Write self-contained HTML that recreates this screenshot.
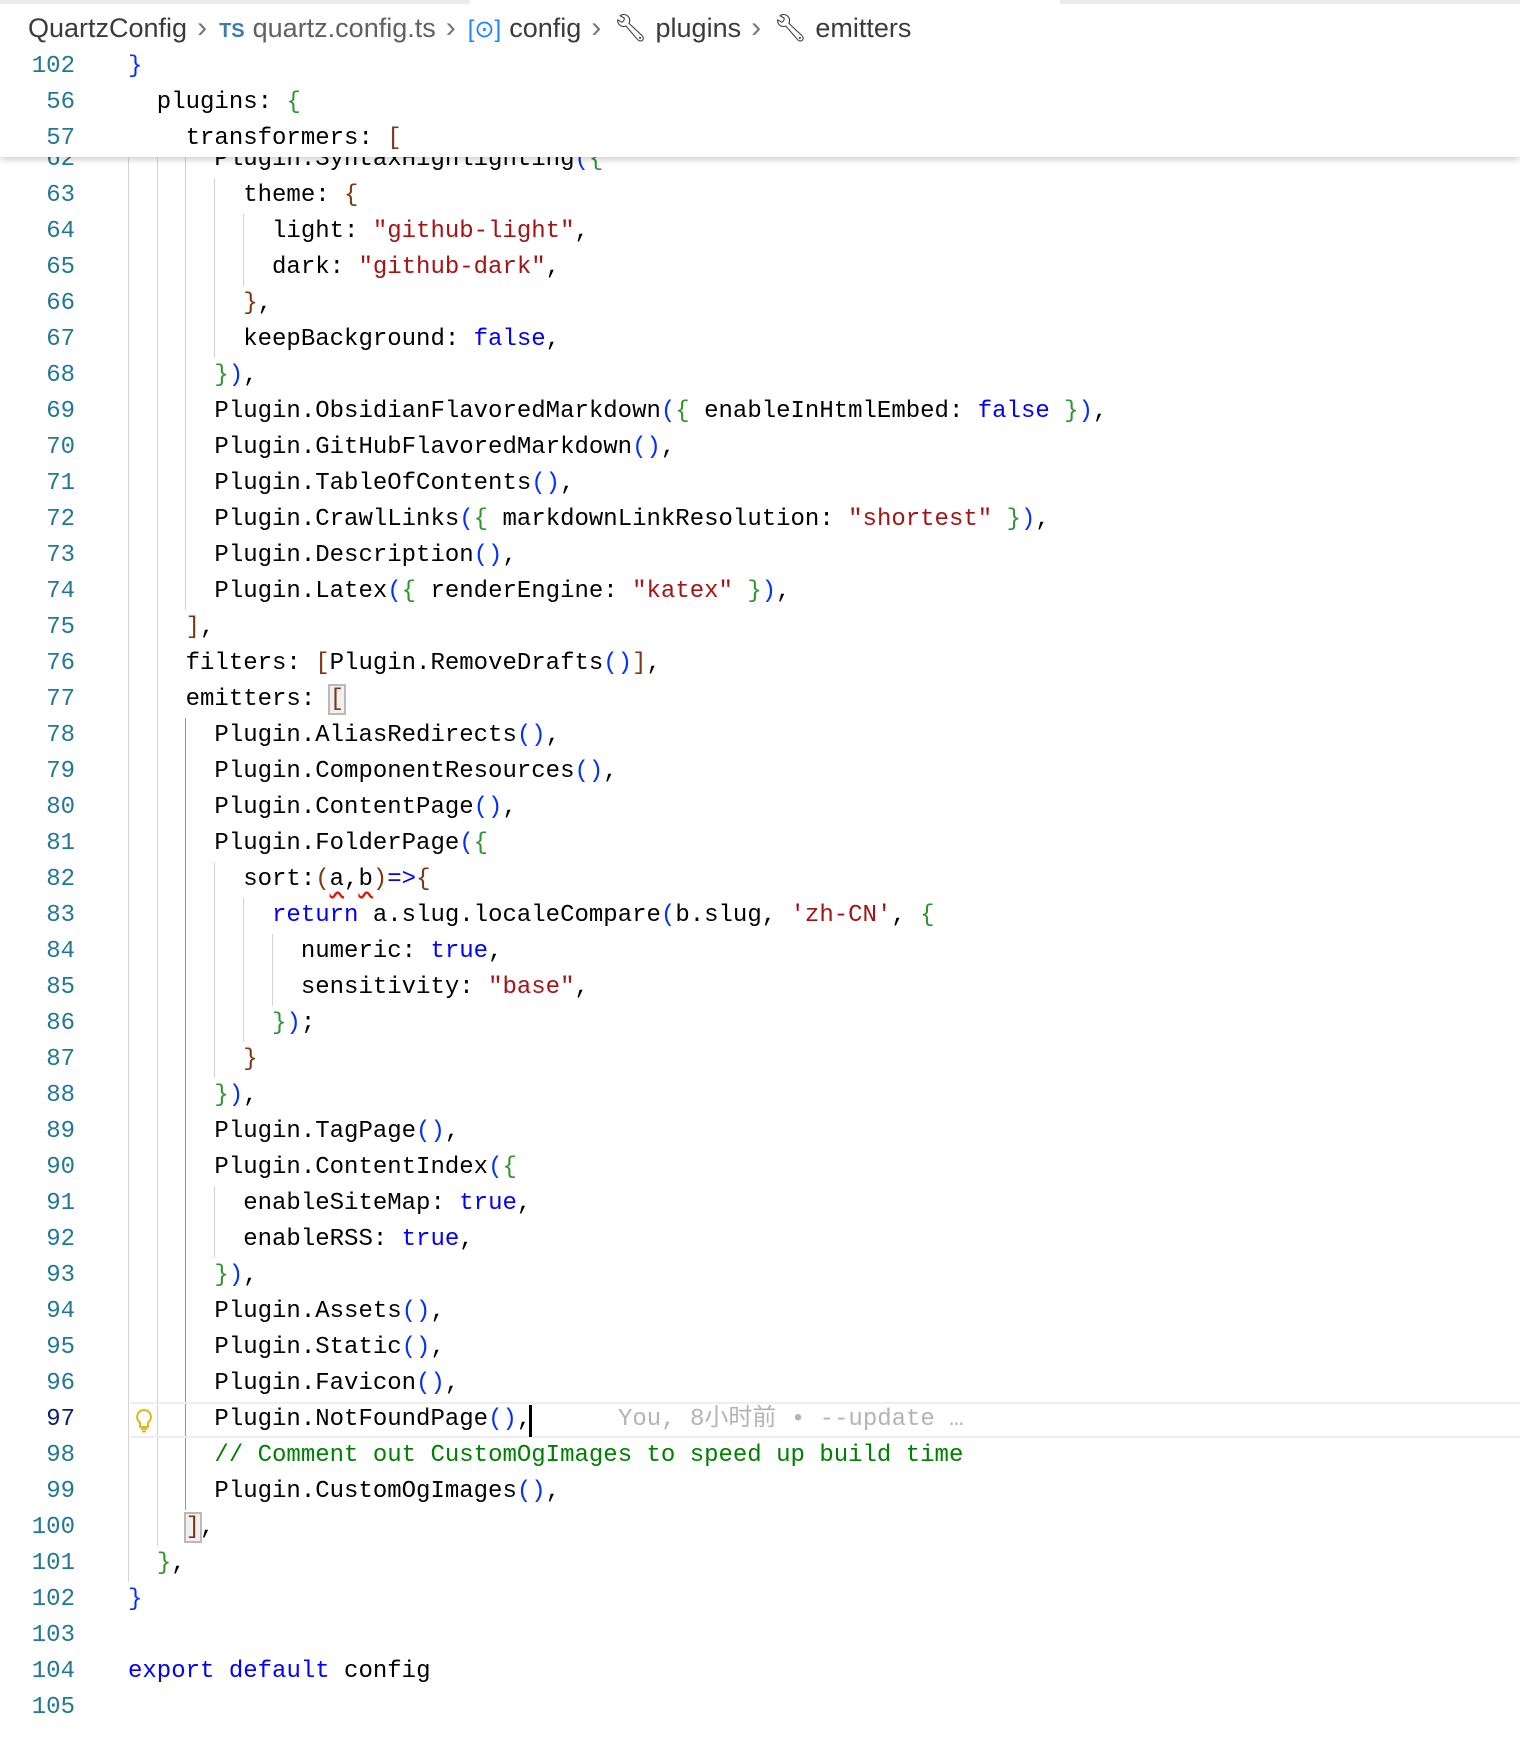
<!DOCTYPE html>
<html><head><meta charset="utf-8"><style>
html,body{margin:0;padding:0;background:#fff;width:1520px;height:1752px;overflow:hidden;position:relative}
.ln{position:absolute;left:0;width:75px;text-align:right;font:24px/36px "Liberation Mono",monospace;color:#237893;height:36px}
.cd{position:absolute;left:128px;font:24px/36px "Liberation Mono",monospace;color:#000;white-space:pre;height:36px}
.k{color:#0000ff}.s{color:#a31515}.b1{color:#0431fa}.b2{color:#319331}.b3{color:#7b3814}.c{color:#008000}
.g{position:absolute;width:1px;background:#d3d3d3}
.sq{text-decoration:underline wavy #e51400;text-underline-offset:6px}
.box{outline:2px solid #b9b9b9;background:#f0f0f0}
#sticky{position:absolute;left:0;top:0;width:1520px;height:157px;background:#fff;box-shadow:0 3px 6px rgba(0,0,0,.18);z-index:5}
.bc{position:absolute;top:9px;font:27px/38px "Liberation Sans",sans-serif;color:#616161;white-space:nowrap}
.ch{color:#777;font-size:30px;padding:0 12px 0 10px}
.ic{margin-right:8px}
</style></head><body>
<div style="position:absolute;left:0;top:0;width:1520px;height:4px;background:#ececec;z-index:6"></div>
<div style="position:absolute;left:470px;top:0;width:590px;height:4px;background:#fff;z-index:7"></div>

<div id="sticky">
 <div class="bc" style="left:28px;color:#3b3b3b">QuartzConfig<span class="ch">&#x203A;</span><span class="ic" style="color:#3d7ea6;font-weight:bold;font-size:20px">TS</span><span style="color:#616161">quartz.config.ts</span><span class="ch">&#x203A;</span><span class="ic" style="color:#1a85ff;font-size:24px">[&#x2299;]</span><span>config</span><span class="ch">&#x203A;</span><span class="ic">&#x1F527;&#xFE0E;</span>plugins<span class="ch">&#x203A;</span><span class="ic">&#x1F527;&#xFE0E;</span>emitters</div>
 <div class="ln" style="top:49px">102</div><div class="cd" style="top:49px"><span class="b1">}</span></div>
 <div class="ln" style="top:85px">56</div><div class="cd" style="top:85px">  plugins: <span class="b2">{</span></div>
 <div class="ln" style="top:121px">57</div><div class="cd" style="top:121px">    transformers: <span class="b3">[</span></div>
</div>

<div id="code"></div>
<script>
const L=[
[62,'      Plugin.SyntaxHighlighting<span class="b1">(</span><span class="b2">{</span>'],
[63,'        theme: <span class="b3">{</span>'],
[64,'          light: <span class="s">"github-light"</span>,'],
[65,'          dark: <span class="s">"github-dark"</span>,'],
[66,'        <span class="b3">}</span>,'],
[67,'        keepBackground: <span class="k">false</span>,'],
[68,'      <span class="b2">}</span><span class="b1">)</span>,'],
[69,'      Plugin.ObsidianFlavoredMarkdown<span class="b1">(</span><span class="b2">{</span> enableInHtmlEmbed: <span class="k">false</span> <span class="b2">}</span><span class="b1">)</span>,'],
[70,'      Plugin.GitHubFlavoredMarkdown<span class="b1">()</span>,'],
[71,'      Plugin.TableOfContents<span class="b1">()</span>,'],
[72,'      Plugin.CrawlLinks<span class="b1">(</span><span class="b2">{</span> markdownLinkResolution: <span class="s">"shortest"</span> <span class="b2">}</span><span class="b1">)</span>,'],
[73,'      Plugin.Description<span class="b1">()</span>,'],
[74,'      Plugin.Latex<span class="b1">(</span><span class="b2">{</span> renderEngine: <span class="s">"katex"</span> <span class="b2">}</span><span class="b1">)</span>,'],
[75,'    <span class="b3">]</span>,'],
[76,'    filters: <span class="b3">[</span>Plugin.RemoveDrafts<span class="b1">()</span><span class="b3">]</span>,'],
[77,'    emitters: <span class="b3 box">[</span>'],
[78,'      Plugin.AliasRedirects<span class="b1">()</span>,'],
[79,'      Plugin.ComponentResources<span class="b1">()</span>,'],
[80,'      Plugin.ContentPage<span class="b1">()</span>,'],
[81,'      Plugin.FolderPage<span class="b1">(</span><span class="b2">{</span>'],
[82,'        sort:<span class="b3">(</span><span class="sq">a</span>,<span class="sq">b</span><span class="b3">)</span><span class="k">=&gt;</span><span class="b3">{</span>'],
[83,'          <span class="k">return</span> a.slug.localeCompare<span class="b1">(</span>b.slug, <span class="s">\'zh-CN\'</span>, <span class="b2">{</span>'],
[84,'            numeric: <span class="k">true</span>,'],
[85,'            sensitivity: <span class="s">"base"</span>,'],
[86,'          <span class="b2">}</span><span class="b1">)</span>;'],
[87,'        <span class="b3">}</span>'],
[88,'      <span class="b2">}</span><span class="b1">)</span>,'],
[89,'      Plugin.TagPage<span class="b1">()</span>,'],
[90,'      Plugin.ContentIndex<span class="b1">(</span><span class="b2">{</span>'],
[91,'        enableSiteMap: <span class="k">true</span>,'],
[92,'        enableRSS: <span class="k">true</span>,'],
[93,'      <span class="b2">}</span><span class="b1">)</span>,'],
[94,'      Plugin.Assets<span class="b1">()</span>,'],
[95,'      Plugin.Static<span class="b1">()</span>,'],
[96,'      Plugin.Favicon<span class="b1">()</span>,'],
[97,'      Plugin.NotFoundPage<span class="b1">()</span>,'],
[98,'      <span class="c">// Comment out CustomOgImages to speed up build time</span>'],
[99,'      Plugin.CustomOgImages<span class="b1">()</span>,'],
[100,'    <span class="b3 box">]</span>,'],
[101,'  <span class="b2">}</span>,'],
[102,'<span class="b1">}</span>'],
[103,''],
[104,'<span class="k">export</span> <span class="k">default</span> config'],
[105,'']];
let h='';const cw=14.37;const T0=178;
for(const [n,t] of L){
 const top=T0+(n-63)*36;
 const ind=(t.match(/^ */)[0]).length;
 for(let c=0;c<ind;c+=2){
  const act=(c==4&&n>=78&&n<=99);
  h+=`<div class="g" style="left:${Math.round(128+c*cw)}px;top:${top}px;height:36px;${act?'background:#939393':''}"></div>`;
 }
 if(n==97){h+=`<div style="position:absolute;left:130px;top:${top}px;width:1390px;height:32px;border-top:2px solid #eee;border-bottom:2px solid #eee"></div>`;}
 h+=`<div class="ln" style="top:${top}px;${n==97?'color:#0b216f':''}">${n}</div><div class="cd" style="top:${top}px">${t}</div>`;
}
const t97=T0+34*36;
h+=`<div style="position:absolute;left:529px;top:${t97+3}px;width:3px;height:32px;background:#000"></div>`;
h+=`<div class="cd" style="left:618px;top:${t97}px;color:#b4b4b4;font-family:'Liberation Mono','Noto Sans CJK SC',monospace">You, 8小时前 • --update …</div>`;
h+=`<svg style="position:absolute;left:134px;top:${t97+6}px" width="20" height="26" viewBox="0 0 20 26"><path d="M10 2a7 7 0 0 0-4 12.7V19h8v-4.3A7 7 0 0 0 10 2z M7 21h6 M8 23.5h4" fill="none" stroke="#ddb100" stroke-width="1.8"/></svg>`;
document.getElementById('code').innerHTML=h;
</script>
</body></html>
